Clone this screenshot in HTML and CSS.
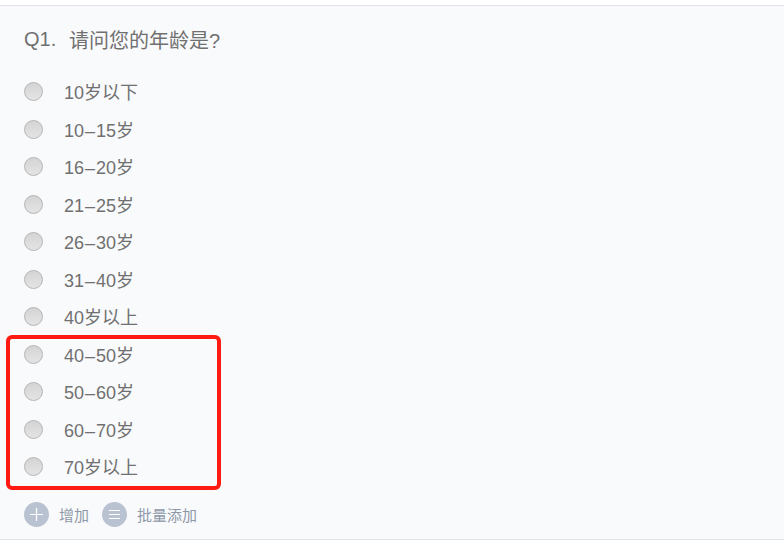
FILE: index.html
```html
<!DOCTYPE html>
<html lang="zh-CN">
<head>
    <meta charset="UTF-8">
    <meta name="viewport" content="width=device-width, initial-scale=1.0">
    <title>问卷题目</title>
    <link rel="stylesheet" href="styles.css">
</head>
<body>

    <div class="question">
        <div class="question-title">
            <span class="question-no">Q1.</span>
            <span class="question-text">请问您的年龄是?</span>
        </div>

        <ul class="options">
            <li class="option"><span class="radio"></span><span class="option-label">10岁以下</span></li>
            <li class="option"><span class="radio"></span><span class="option-label">10<span class="dash">–</span>15岁</span></li>
            <li class="option"><span class="radio"></span><span class="option-label">16<span class="dash">–</span>20岁</span></li>
            <li class="option"><span class="radio"></span><span class="option-label">21<span class="dash">–</span>25岁</span></li>
            <li class="option"><span class="radio"></span><span class="option-label">26<span class="dash">–</span>30岁</span></li>
            <li class="option"><span class="radio"></span><span class="option-label">31<span class="dash">–</span>40岁</span></li>
            <li class="option"><span class="radio"></span><span class="option-label">40岁以上</span></li>
            <li class="option"><span class="radio"></span><span class="option-label">40<span class="dash">–</span>50岁</span></li>
            <li class="option"><span class="radio"></span><span class="option-label">50<span class="dash">–</span>60岁</span></li>
            <li class="option"><span class="radio"></span><span class="option-label">60<span class="dash">–</span>70岁</span></li>
            <li class="option"><span class="radio"></span><span class="option-label">70岁以上</span></li>
        </ul>

        <div class="actions">
            <span class="action">
                <svg class="action-icon" viewBox="0 0 25 25">
                    <circle cx="12.5" cy="12.5" r="12.5" fill="#b9c2d0"/>
                    <path d="M12.5 6v13M6 12.5h13" stroke="#fff" stroke-width="1.2" fill="none"/>
                </svg>
                增加
            </span>
            <span class="action">
                <svg class="action-icon" viewBox="0 0 25 25">
                    <circle cx="12.5" cy="12.5" r="12.5" fill="#b9c2d0"/>
                    <path d="M7 8.5h11M7 12.5h11M7 16.5h11" stroke="#fff" stroke-width="1.2" fill="none"/>
                </svg>
                批量添加
            </span>
        </div>

        <!-- 红框标注 -->
        <div class="highlight"></div>
    </div>

</body>
</html>
```

FILE: styles.css
```css
body {
    margin: 0;
    background-color: #fff;
    font-family: "Liberation Sans", "Noto Sans CJK SC", sans-serif;
    color: #707070;
}

.question {
    position: relative;
    margin-top: 5px;
    height: 533px;
    background-color: #f9fafc;
    border-top: 1px solid #e1e3e6;
    border-bottom: 1px solid #e1e3e6;
}

.question-title {
    display: flex;
    align-items: baseline;
    padding: 19px 24px 0;
    height: 48px;
}

.question-no {
    font-size: 20px;
    width: 46px;
    position: relative;
    top: -2px;
}

.question-text {
    font-size: 20px;
    margin-left: -1px;
}

.options {
    list-style: none;
    margin: 0;
    padding: 0 24px;
}

.option {
    display: flex;
    align-items: center;
    height: 37.5px;
}

.radio {
    width: 17px;
    height: 17px;
    border: 1px solid #b5b5b5;
    border-radius: 50%;
    background: linear-gradient(#d4d4d4, #e4e4e4);
    margin-right: 21px;
}

.option-label {
    font-size: 18px;
    padding-bottom: 1px;
}

.dash {
    margin: 0 1px;
}

.actions {
    display: flex;
    align-items: center;
    gap: 13px;
    padding: 16px 24px 0;
}

.action {
    display: flex;
    align-items: center;
    font-size: 15px;
    color: #8e99a8;
}

.action-icon {
    width: 25px;
    height: 25px;
    margin-right: 10px;
}

.highlight {
    position: absolute;
    left: 6px;
    top: 329px;
    width: 207px;
    height: 147px;
    border: 4px solid #ff1a12;
    border-radius: 6px;
}
```
